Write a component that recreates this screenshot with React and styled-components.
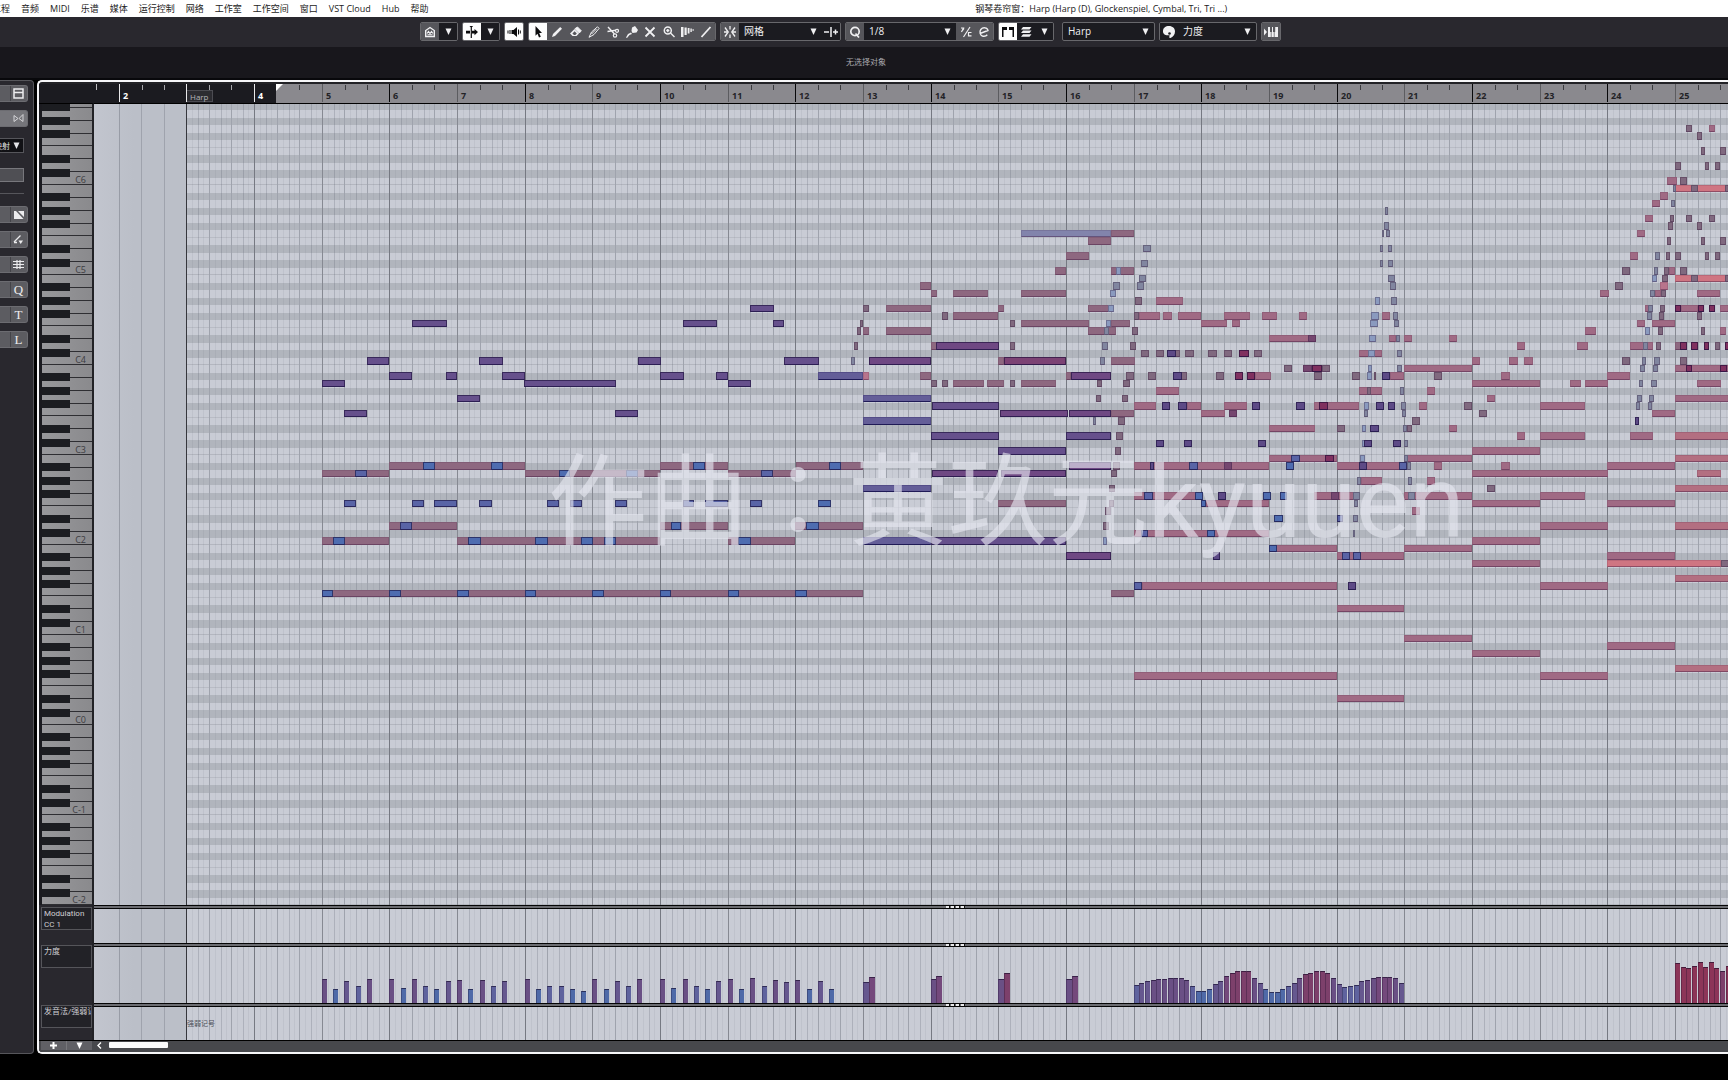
import React from 'react';
import styled, { createGlobalStyle, css } from 'styled-components';

const UI_FONT = '"Open Sans", "Noto Sans CJK SC", sans-serif';

const GlobalStyle = createGlobalStyle`
  *, *::before, *::after { box-sizing: border-box; }
  body { margin: 0; background: #000; font-family: ${UI_FONT}; overflow: hidden; }
  button, select { font: inherit; margin: 0; padding: 0; border: 0; }
`;

/* ---------- time axis ---------- */

const BAR_WIDTH = 203 / 3;
const AXIS_LEFT = 94;
const FIRST_BAR = 2;
const timeX = (bar) => Math.round(74 / 3 + (bar - FIRST_BAR) * BAR_WIDTH);
const barWidth = (bar) => timeX(bar + 1) - timeX(bar);
const BARS = Array.from({ length: 24 }, (_, i) => FIRST_BAR + i);
const ROW = 7.5;

/* ---------- note data: pitch -> "start-end colour" ---------- */

const COLORS = {
  r: '#8e6880', R: '#a06a84', m: '#80697f', s: '#8186a0', z: '#8a9abf',
  b: '#4e6cb0', B: '#5964a6', v: '#66508c', V: '#6f4883', i: '#645e98',
  g: '#7c4274', q: '#5d4a86', x: '#80305f', S: '#cf7582', p: '#b36f81',
  l: '#8284ac', k: '#b8748c', h: '#75466f',
};
const OUTLINED = 'vqbBVxg';
const SOFT = 'rRSpkl';

const NOTES = {
  103: '1686-1692m 1709-1715R',
  102: '1697-1702m',
  100: '1701-1705m 1720-1726m',
  98: '1675-1681m 1705-1709m 1715-1720m',
  96: '1667-1677R 1680-1687m',
  95: '1675-1734S 1673-1676s 1691-1698m 1725-1734m',
  94: '1660-1668R',
  93: '1652-1660R 1671-1675s',
  92: '1385-1388s',
  91: '1645-1653R 1670-1674m 1686-1692m 1709-1715m',
  90: '1384-1389s 1668-1673m 1697-1702m',
  89: '1021-1111l 1111-1134r 1382-1384s 1386-1390s 1637-1645R',
  88: '1088-1111r 1667-1671m 1701-1705m 1720-1726m',
  87: '1143-1151s 1380-1383s 1388-1392s',
  86: '1066-1089r 1630-1638R 1655-1660s 1666-1670m 1675-1681m 1705-1709m 1715-1720m',
  85: '1141-1148s 1380-1383s 1388-1393s',
  84: '1055-1066r 1111-1134r 1116-1121z 1622-1630m 1654-1658s 1669-1675R 1664-1669m 1680-1687m',
  83: '1139-1146s 1388-1395s 1675-1734S 1652-1657z 1662-1668m 1691-1698m 1725-1734m',
  82: '920-931r 1113-1120s 1137-1144s 1390-1396s 1615-1623m 1660-1668k',
  81: '931-937r 953-988r 1021-1066r 1110-1116z 1600-1609R 1655-1661R 1650-1655s 1661-1666m 1697-1720R',
  80: '1135-1142m 1156-1183R 1375-1380z 1391-1397s',
  79: '750-774v 863-869m 886-931r 998-1004r 1088-1110r 1108-1114z 1645-1649R 1648-1653s 1660-1665m 1681-1698R 1675-1681x 1698-1704x 1709-1715x 1720-1734R',
  78: '942-948m 953-998r 1139-1160R 1134-1139m 1163-1172R 1178-1201R 1224-1250R 1262-1277R 1299-1307R 1371-1379z 1382-1390R 1393-1398s 1647-1652s 1659-1664m 1697-1702m',
  77: '412-447v 683-717v 773-784v 860-863m 1010-1015m 1021-1089r 1111-1130r 1106-1111z 1201-1227R 1232-1240R 1370-1378z 1394-1399s 1637-1645R 1652-1675R',
  76: '857-861m 863-869r 886-931r 1088-1116r 1104-1109s 1132-1138m 1585-1596R 1645-1650z 1658-1663m 1701-1705m 1720-1726R',
  75: '1269-1316R 1308-1316h 1369-1376z 1389-1396R 1396-1400s 1404-1412R 1449-1457R',
  74: '854-858m 931-937r 936-999V 1010-1015m 1102-1108s 1130-1136m 1517-1525R 1577-1588R 1630-1653R 1643-1648s 1656-1661m 1675-1681r 1680-1687x 1691-1698x 1704-1709x 1715-1720m 1725-1734x',
  73: '1141-1149m 1156-1164m 1174-1180m 1167-1176q 1185-1194m 1208-1217m 1224-1232m 1239-1249x 1254-1262m 1359-1382R 1368-1375z 1397-1402s',
  72: '367-389v 479-503v 638-661v 784-819v 851-855s 869-931V 998-1004r 1004-1066g 1100-1105s 1111-1135r 1472-1480R 1509-1518R 1524-1533R 1622-1630m 1642-1646s 1654-1660s 1680-1687m',
  71: '1284-1292m 1303-1312h 1312-1322x 1322-1330m 1368-1372z 1397-1402s 1404-1472R 1640-1645s 1653-1658s 1675-1734R 1686-1692x 1720-1727x',
  70: '389-412v 446-457v 502-525v 660-684v 716-728v 818-863i 863-869k 920-931r 1066-1071r 1071-1111V 1126-1134m 1148-1156m 1180-1187m 1173-1182q 1216-1224m 1235-1243x 1255-1271R 1247-1255x 1314-1322m 1352-1360m 1374-1376m 1367-1372z 1390-1404R 1382-1390q 1434-1442m 1501-1510R 1607-1630R',
  69: '322-345v 524-616v 728-751v 931-937m 942-948m 953-984r 987-1004r 1010-1015m 1021-1056r 1097-1102m 1123-1130m 1472-1540R 1570-1581R 1585-1608R 1639-1643s 1651-1657s 1697-1721R',
  68: '1156-1179R 1359-1382R 1367-1371m 1400-1404s 1427-1435R',
  67: '457-480v 863-931i 1096-1101m 1122-1128m 1487-1495R 1637-1642s 1649-1654s 1675-1734R',
  66: '932-999v 1134-1156R 1162-1170q 1187-1201R 1178-1187q 1224-1247R 1252-1260q 1296-1305q 1314-1359R 1319-1328x 1364-1369z 1376-1384q 1388-1395q 1401-1406s 1419-1427R 1464-1472m 1540-1585R 1636-1640s 1648-1652s',
  65: '344-367v 615-638v 1000-1068V 1069-1111V 1111-1134r 1201-1225R 1229-1237h 1364-1368s 1402-1406s 1479-1487m 1652-1675R',
  64: '863-931i 1093-1096s 1118-1125m 1412-1420m 1635-1639q',
  63: '1269-1315R 1337-1345m 1362-1366z 1370-1379q 1407-1412m 1403-1407s 1449-1457R',
  62: '931-999v 1066-1111v 1116-1123m 1517-1525R 1540-1585R 1630-1653R 1675-1734p',
  61: '1156-1164q 1184-1192q 1258-1266q 1362-1365z 1364-1372q 1393-1401q 1404-1408s',
  60: '998-1066v 1115-1121m 1472-1540R',
  59: '1269-1337R 1291-1300B 1325-1334x 1360-1365z 1404-1472R 1404-1408s 1675-1734p',
  58: '389-525r 660-728r 796-863r 423-435b 491-503b 693-705b 829-841b 1069-1111V 1113-1120m 1134-1269R 1150-1154q 1189-1198B 1224-1232h 1286-1294b 1337-1404R 1359-1367q 1407-1411s 1399-1407B 1434-1442R 1501-1510R 1607-1675R',
  57: '322-389r 525-660r 728-796r 355-367B 559-570b 626-638b 761-773B 932-998V 1001-1066V 1111-1117m 1472-1608R 1697-1721p',
  56: '1357-1361s 1361-1382R 1408-1412s 1427-1435R',
  55: '863-931i 1109-1115m 1487-1495m 1675-1734p',
  54: '1134-1196R 1144-1153B 1195-1203b 1218-1226q 1263-1271b 1280-1287b 1314-1357R 1331-1339h 1353-1360s 1404-1472R 1408-1415s 1540-1585R',
  53: '344-356B 412-424B 434-457B 479-492B 547-559B 570-582B 615-627B 683-694B 705-728B 750-762B 818-831b 998-1066r 1109-1114m 1201-1206b 1206-1269R 1354-1358s 1472-1540R 1607-1675R',
  52: '1105-1111m 1412-1420R',
  51: '1274-1283b 1337-1343B 1353-1358s',
  50: '389-457r 660-728r 795-863r 400-412B 671-681b 806-819b 1103-1109m 1540-1608R 1675-1734p',
  49: '1134-1269R 1141-1148B 1207-1215b 1353-1355s',
  48: '322-389r 457-660r 728-795r 333-345b 468-481b 535-548b 581-593b 604-616b 738-751b 863-931i 931-1066v 1103-1107z 1472-1540R',
  47: '1269-1337R 1269-1277b 1404-1472R',
  46: '1066-1111V 1213-1220q 1337-1404R 1342-1350B 1353-1361B 1607-1675R',
  45: '1472-1540R 1607-1721S 1721-1734m',
  43: '1675-1734p',
  42: '1142-1337R 1134-1142B 1348-1356q 1540-1608R',
  41: '322-863r 322-333b 389-401b 457-469b 525-536b 592-604b 660-671b 728-739b 795-807b 1111-1134r',
  39: '1337-1404R',
  35: '1404-1472R',
  34: '1607-1675R',
  33: '1472-1540R',
  31: '1675-1734p',
  30: '1134-1337R 1540-1608R',
  27: '1337-1404R',
};

const PARSED_NOTES = Object.entries(NOTES).flatMap(([pitch, list]) =>
  list.split(' ').map((item) => {
    const [, from, to, kind] = item.match(/^(\d+)-(\d+)(\w)$/);
    return { pitch: Number(pitch), from: Number(from), to: Number(to), kind };
  })
);

/* velocity bars: `step` events per bar, heights from `bar` on */
const VELOCITIES = [
  { bar: 5, step: 6, width: 5, heights: [24, 14, 22, 17, 24, 0, 24, 15, 24, 17, 14, 22, 23, 14, 23, 17, 22, 0, 24, 14, 17, 17, 14, 12, 24, 14, 22, 17, 24, 0, 24, 15, 24, 17, 14, 22, 24, 14, 25, 17, 23, 21, 23, 14, 22, 14] },
  { bar: 13, step: 12, width: 6, heights: [21, 26] },
  { bar: 14, step: 12, width: 6, heights: [24, 27] },
  { bar: 15, step: 12, width: 6, heights: [24, 30] },
  { bar: 16, step: 12, width: 6, heights: [24, 27] },
  { bar: 17, step: 12, width: 5, heights: [18, 20, 22, 23, 24, 24, 25, 25, 25, 23, 17, 12, 12, 14, 19, 22, 27, 30, 32, 32, 32, 25, 20, 14, 11, 11, 14, 17, 20, 25, 29, 30, 32, 32, 30, 25, 19, 16, 17, 18, 22, 23, 25, 26, 26, 26, 25, 20] },
  { bar: 25, step: 12, width: 5, heights: [40, 36, 35, 37, 41, 36, 41, 35, 32, 37] },
];
const VELOCITY_BARS = VELOCITIES.flatMap(({ bar, step, width, heights }) =>
  heights
    .map((height, i) => ({ x: timeX(bar + i / step), width, height }))
    .filter((v) => v.height > 0)
);
const velocityColor = (h) => {
  if (h <= 15) return '#4f6aa8';
  if (h <= 18) return '#5f639e';
  if (h <= 22) return '#66588f';
  if (h <= 25) return '#6a5085';
  if (h <= 28) return '#74497c';
  if (h <= 32) return '#7d406b';
  return '#8c3558';
};

/* ---------- shell ---------- */

const Shell = styled.div`
  display: flex;
  flex-direction: column;
  height: 100vh;
  padding-bottom: 26px;
  background: #000;
  color: #e4e4e8;
`;

const MenuBar = styled.header`
  display: flex;
  align-items: center;
  height: 17px;
  background: #fff;
  color: #222;
  font-size: 9px;
  line-height: 16px;
  white-space: nowrap;
`;
const Menu = styled.nav`
  display: flex;
  gap: 11px;
  margin-left: -8px;
`;
const MenuItem = styled.button`
  background: none;
  color: #222;
`;
const WindowTitle = styled.h1`
  flex: 1;
  margin: 0;
  padding-left: 46px;
  font-size: 9px;
  font-weight: 400;
  text-align: center;
`;

const Toolbar = styled.div`
  display: flex;
  justify-content: center;
  align-items: center;
  gap: 4px;
  height: 30px;
  padding: 0 27px 1px 0;
  background: #29282e;
`;
const Group = styled.div`
  display: flex;
  height: 19px;
  border: 1px solid #68686c;
  border-radius: 2px;
  background: #1b1b20;
  overflow: hidden;
  ${(p) => p.$spaced && css`margin-left: 4px;`}
`;
const TONES = {
  dark: ['#1b1b20', '#f0f0f2'],
  mid: ['#56565b', '#f0f0f2'],
  lit: ['#fdfdfd', '#0b0b0d'],
};
const ToolButton = styled.button`
  display: flex;
  align-items: center;
  justify-content: center;
  width: ${(p) => p.$w || 18}px;
  background: ${(p) => TONES[p.$tone || 'mid'][0]};
  color: ${(p) => TONES[p.$tone || 'mid'][1]};
`;
const SelectBox = styled.label`
  display: grid;
  align-items: center;
  width: ${(p) => p.$w}px;
  padding: 0 5px;
  font-size: 10px;
  color: #f0f0f2;
  & > * { grid-area: 1 / 1; }
  & > svg { justify-self: end; pointer-events: none; }
`;
const Select = styled.select`
  width: 100%;
  height: 17px;
  appearance: none;
  background: transparent;
  color: inherit;
  line-height: 17px;
  outline: none;
`;

const InfoLine = styled.div`
  display: flex;
  align-items: center;
  justify-content: center;
  height: 33px;
  padding: 0 0 2px 4px;
  background: #18171c;
  border-bottom: 2px solid #08080b;
  color: #a9a9ae;
  font-size: 8px;
`;

const Workspace = styled.main`
  flex: 1;
  display: flex;
  gap: 3px;
  min-height: 0;
`;

/* ---------- inspector strip ---------- */

const Inspector = styled.aside`
  display: flex;
  flex-direction: column;
  gap: 8px;
  width: 34px;
  padding: 4px 5px 0 0;
  background: #29282e;
  border: 1px solid #56565b;
  border-left: 0;
  border-radius: 0 4px 4px 0;
`;
const InspectorTab = styled.button`
  display: flex;
  align-items: center;
  justify-content: center;
  height: 17px;
  padding-left: 10px;
  background: linear-gradient(to right, #5c5c61 10px, #444449 10px, #444449 11px, #5c5c61 11px);
  border: 1px solid #6c6c71;
  border-left: 0;
  border-radius: 0 3px 3px 0;
  color: #ececee;
  font: 13px/15px "Liberation Serif", serif;
  ${(p) => p.$bright && css`background: #75757a; color: #d4d4d7;`}
`;
const MapSelect = styled.label`
  display: grid;
  align-items: center;
  height: 15px;
  margin: 3px 4px 0 0;
  padding-right: 3px;
  background: #111115;
  border: 1px solid #56565b;
  border-left: 0;
  font-size: 8px;
  & > * { grid-area: 1 / 1; }
  & > svg { justify-self: end; pointer-events: none; }
`;
const MapChoice = styled.select`
  width: 24px;
  appearance: none;
  background: transparent;
  color: #e4e4e8;
  outline: none;
  margin-left: -6px;
`;
const Swatch = styled.button`
  height: 14px;
  margin: 7px 4px 0 0;
  background: #4f4f54;
  border: 1px solid #77777c;
  border-left: 0;
`;
const Rule = styled.hr`
  width: 24px;
  height: 1px;
  margin: 3px 0 4px;
  border: 0;
  background: #56565b;
`;

/* ---------- editor ---------- */

const Editor = styled.section`
  flex: 1;
  display: flex;
  flex-direction: column;
  min-width: 0;
  padding-top: 2px;
  background: #222226;
  border: 2px solid #f6f6f8;
  border-right: 0;
  border-radius: 5px 0 0 5px;
  overflow: hidden;
`;
const Track = styled.div`
  display: flex;
  flex: ${(p) => (p.$h ? `0 0 ${p.$h}px` : '1 1 0')};
  min-height: 0;
`;
const Head = styled.div`
  flex: 0 0 55px;
  padding: 2px 0 0 2px;
  background: #29282e;
  border-right: 2px solid #222226;
  overflow: hidden;
`;
const Axis = styled.div`
  position: relative;
  flex: 1;
  display: flex;
  min-width: 0;
  min-height: 0;
  overflow: hidden;
`;
const RulerAxis = styled(Axis)`
  background: linear-gradient(to right, #1b1b20 182px, #8a898e 182px);
  border-bottom: 1px solid #000;
`;
const RulerHead = styled(Head)`
  background: #1b1b20;
  border-color: #1b1b20;
  border-bottom: 1px solid #000;
`;
const Lead = styled.div`
  flex: 0 0 25px;
  background: linear-gradient(to right, transparent 2px, ${(p) => p.$line} 2px, ${(p) => p.$line} 3px, transparent 3px) 0 0 / 25px ${(p) => p.$tick || '100%'} no-repeat;
`;
const RulerBar = styled.div`
  flex: 0 0 auto;
  display: flex;
  height: 18px;
  padding: 6px 0 0 3px;
  color: ${(p) => (p.$outside ? '#fff' : '#232327')};
  border-left: 1px solid ${(p) => (p.$outside ? '#e8e8ea' : p.$strong ? '#08080a' : '#5c5c60')};
  background-image: linear-gradient(${(p) => (p.$outside ? '#a8a8ac' : '#3c3c40')} 0 0), linear-gradient(${(p) => (p.$late || !p.$outside ? '#3c3c40' : '#a8a8ac')} 0 0);
  background-size: 1px 5px;
  background-position: 22px 1px, 44px 1px;
  background-repeat: no-repeat;
  font: 700 9px/12px "Open Sans", sans-serif;
`;
const TrackTag = styled.span`
  height: 12px;
  margin-left: -3px;
  padding: 0 3px;
  background: #2c2c31;
  border: 1px solid #4c4c52;
  border-left: 0;
  color: #b4b4b8;
  font-size: 8px;
  font-weight: 400;
  line-height: 11px;
`;
const Locator = styled.i`
  position: absolute;
  left: 182px;
  top: 0;
  border-top: 7px solid #fff;
  border-right: 7px solid transparent;
`;

/* one octave of lane shading, repeated from the bottom of the roll upward */
const RollAxis = styled(Axis)`
  background-color: #c9ccd5;
  background-image: linear-gradient(to bottom,
    #c9ccd5 8px, #b1b5bd 8px, #b1b5bd 15px, #c9ccd5 15px,
    #c9ccd5 23px, #b1b5bd 23px, #b1b5bd 30px, #c9ccd5 30px,
    #c9ccd5 38px, #b1b5bd 38px, #b1b5bd 45px, #c9ccd5 45px,
    #c9ccd5 52px, #b9bcc5 52px, #b9bcc5 53px, #c9ccd5 53px,
    #c9ccd5 60px, #b1b5bd 60px, #b1b5bd 68px, #c9ccd5 68px,
    #c9ccd5 75px, #b1b5bd 75px, #b1b5bd 83px, #c9ccd5 83px,
    #c9ccd5 89px, #b3b6bf 89px);
  background-size: 100% 90px;
  background-position: left bottom;
`;
const LaneAxis = styled(Axis)`
  background: #c9ccd5;
`;
const BeforePart = styled.div`
  position: absolute;
  inset: 0 auto 0 0;
  width: 92px;
  background: linear-gradient(to right, #c2c5ce, #bbbfc8 40px, #bbbfc8);
`;
const GridBar = styled.div`
  position: relative;
  flex: 0 0 auto;
  display: flex;
  border-left: 1px solid ${(p) => (p.$start ? '#36373d' : p.$faint ? '#989ca6' : p.$strong ? '#767982' : '#868992')};
`;
const Beat = styled.div`
  flex: 1;
  background-image: ${(p) => (p.$faint
    ? 'none'
    : `linear-gradient(rgba(90,95,110,.25), rgba(90,95,110,.25)),
       linear-gradient(rgba(90,95,110,.09), rgba(90,95,110,.09)),
       linear-gradient(rgba(90,95,110,.09), rgba(90,95,110,.09))`)};
  background-size: 1px 100%;
  background-position: 11px 0, 5px 0, 16px 0;
  background-repeat: no-repeat;
  & + & { border-left: 1px solid ${(p) => (p.$faint ? '#a3a7b1' : '#9fa3ad')}; }
`;

const noteEdges = (kind) => {
  if (OUTLINED.includes(kind)) return ['rgba(20,10,50,.55)', 'rgba(20,10,60,.7)'];
  if (kind === 'i') return ['rgba(40,30,90,.25)', 'rgba(15,10,70,.8)'];
  if (SOFT.includes(kind)) return ['rgba(60,30,60,.14)', 'rgba(60,20,60,.42)'];
  return ['rgba(50,30,60,.32)', 'rgba(50,20,60,.42)'];
};
const NoteBox = styled.div.attrs((p) => ({
  style: {
    left: p.$x,
    width: p.$w,
    bottom: Math.round(p.$pitch * ROW),
    height: Math.round((p.$pitch + 1) * ROW) - Math.round(p.$pitch * ROW),
  },
}))`
  position: absolute;
  background: ${(p) => COLORS[p.$kind]};
  border: 1px solid ${(p) => noteEdges(p.$kind)[0]};
  border-bottom-color: ${(p) => noteEdges(p.$kind)[1]};
`;
const VelocityBar = styled.div.attrs((p) => ({
  style: { left: p.$x, width: p.$w, height: p.$h, background: velocityColor(p.$h) },
}))`
  position: absolute;
  bottom: 0;
  border-top: 1px solid rgba(20, 10, 40, .6);
  border-left: 1px solid rgba(20, 10, 40, .3);
`;
const Watermark = styled.div`
  position: absolute;
  left: 454px;
  bottom: 330px;
  color: rgba(228, 229, 238, .66);
  font: 100px/144px Roboto, "Noto Sans CJK TC", sans-serif;
  white-space: nowrap;
  pointer-events: none;
`;

/* ---------- keyboard ---------- */

const KeyHead = styled(Head)`
  display: flex;
  flex-direction: column-reverse;
  padding: 0 0 0 3px;
  background: #1b1b20;
`;
const Octave = styled.div`
  position: relative;
  flex: 0 0 90px;
  display: flex;
  flex-direction: column;
`;
const WhiteKey = styled.div`
  flex: 1 1 0;
  min-height: 0;
  background: linear-gradient(to right, #98989b, #8a8a8d);
  border-bottom: 1px solid #2e2e32;
  padding-right: 6px;
  color: #3c3c41;
  font-size: 9px;
  line-height: 15px;
  text-align: right;
`;
const BlackKey = styled.div`
  position: absolute;
  left: 0;
  top: ${(p) => p.$top}px;
  width: 28px;
  height: 8px;
  background: #1c1d21;
`;

/* ---------- controller lanes ---------- */

const LaneColumn = styled.div`
  flex: 1;
  display: flex;
  flex-direction: column;
  min-width: 0;
`;
const Splitter = styled.div`
  display: flex;
  flex: 0 0 4px;
  justify-content: center;
  align-items: center;
  gap: 1px;
  padding-left: 88px;
  background: #6c6d72;
  border-top: 1px solid #050506;
  border-bottom: 1px solid #050506;
`;
const Dot = styled.i`
  width: 4px;
  height: 2px;
  border-right: 1px solid #111;
  background: #e8e8ea;
`;
const LaneLabel = styled.div`
  height: 23px;
  padding: 0 0 0 2px;
  border: 1px solid #55555a;
  background: #222227;
  color: #cfcfd4;
  font: 8px/11px Roboto, "Noto Sans CJK SC", sans-serif;
  white-space: nowrap;
  overflow: hidden;
`;
const LaneNote = styled.span`
  position: absolute;
  left: 93px;
  top: 12px;
  color: #4c4f58;
  font-size: 7px;
  line-height: 10px;
`;
const Footer = styled.footer`
  display: flex;
  align-items: flex-start;
  height: 12px;
  padding-left: 2px;
  background: #47484c;
  border-top: 1px solid #000;
`;
const LaneButtons = styled.div`
  display: flex;
  width: 51px;
  height: 9px;
  background: #606065;
`;
const LaneButton = styled.button`
  flex: 1;
  display: flex;
  align-items: center;
  justify-content: center;
  background: none;
  color: #fff;
  & + & { border-left: 1px solid #77777b; }
`;
const ScrollLeft = styled.button`
  display: flex;
  margin: 1px 7px 0 5px;
  background: none;
  color: #fff;
`;
const Thumb = styled.div`
  width: 59px;
  height: 6px;
  margin-top: 1px;
  border-radius: 1px;
  background: #fbfbfc;
`;

/* ---------- icons ---------- */

const Svg = ({ s = 12, w, children }) => (
  <svg width={w || s} height={s} viewBox={`0 0 ${w || s} ${s}`} fill="currentColor" stroke="none" aria-hidden="true">
    {children}
  </svg>
);
const L = (props) => <path fill="none" stroke="currentColor" strokeWidth="1.4" {...props} />;
const Caret = () => <Svg s={7}><path d="M.5.5h6L3.500 7z" /></Svg>;

const ICONS = {
  home: <Svg><L d="M1.700 10.500V4.500L6 1.500l4.300 3v6z" /><L d="M3 7.500l1.500-2L6 7.500l1.500-2L9 7.500M3.500 8.800h5" strokeWidth="1.100" /></Svg>,
  scroll: <Svg><path d="M0 4.800h4v2.600H0zM6 4.800h2.500V3L12 6.100 8.500 9.200V7.400H6zM4.700 0h1.200v12H4.700zM3.500 0h3.600L5.300 2z" /></Svg>,
  speaker: <Svg w={14}><path d="M4.500 4h2L10 1v10L6.500 8h-2zM2.500 4h1v4h-1zM.5 4.500h1v3h-1zM11 3.500h1v5h-1zM12.800 4.500h1v3h-1z" /></Svg>,
  arrow: <Svg><path d="M3.500 0 10 7H7.200l1.600 3.700-1.800.8L5.500 7.800 3.500 9.700z" /></Svg>,
  pencil: <Svg><path d="M1 11l1-3L9.200 1 11 2.800 4 10z" /></Svg>,
  eraser: <Svg><path d="M0 7.500 4.500 3 9 7.500 6.500 10h-4z" /><L d="M5 2.700 7.500 1 11.300 4.800 9.300 7z" strokeWidth="1" fill="currentColor" /><path d="M2.400 7.400 4.600 5.200 6.800 7.400 5.300 9H4z" fill="#56565b" /></Svg>,
  trim: <Svg><L d="M1 11.300 3.500 6 9.500.8l1.600 1.600L6 8.500zM3.500 8 8.500 3" strokeWidth="1" /></Svg>,
  scissors: <Svg><L d="M1 1l6.500 7M.5 5.500 8.800 4.300" /><circle cx="8" cy="9.500" r="1.700" fill="none" stroke="currentColor" strokeWidth="1.200" /><circle cx="10" cy="4.800" r="1.500" fill="none" stroke="currentColor" strokeWidth="1.200" /></Svg>,
  glue: <Svg><path d="M6 1.500 9 0l3 4-1.500 2.500-4 .5-1-2zM5 6.500 6 8l-2.500 1L1 12l-1-.5 2-3.500z" /></Svg>,
  mute: <Svg><L d="M1.500 1.500l9 9M10.500 1.500l-9 9" strokeWidth="1.800" /></Svg>,
  zoom: <Svg><circle cx="4.800" cy="4.500" r="3.500" fill="none" stroke="currentColor" strokeWidth="1.500" /><L d="M7.500 7 11.500 11M3.200 4.500h3.200M4.800 3v3.200" /></Svg>,
  warp: <Svg w={13}><path d="M0 1h2.500v10H0zM3.500 1.500h2.200v7.500H3.500zM6.700 2h1.800v5.500H6.700zM9.400 2.500h1.400V6H9.400zM11.600 3h1v2h-1z" /></Svg>,
  line: <Svg><L d="M1.500 11 10.500 1" strokeWidth="1.800" /></Svg>,
  snap: <Svg><L d="M6 0v3.500M6 8.500V12M1 1.500 4.200 6 1 10.500M11 1.500 7.800 6 11 10.500M0 6h3M9 6h3" strokeWidth="1.300" /></Svg>,
  nudge: <Svg w={14}><L d="M0 6h5M7 1v10M9 6h5M11.500 3.500v5" strokeWidth="1.500" /></Svg>,
  q: <Svg><circle cx="6" cy="5.500" r="4.200" fill="none" stroke="currentColor" strokeWidth="1.700" /><L d="M6.500 7.500l3.500 4" strokeWidth="1.700" /></Svg>,
  iq: <Svg><L d="M10 1 3.500 11M1 2h2.500L1.500 6M4 2.500 2.500 4.500M11.500 6.500H8.500v3.300h3" strokeWidth="1.200" /></Svg>,
  e: <Svg><L d="M2 7.500 10 4.500C9.500 1.500 5 .8 2.800 3.500 1 6 2.200 9.800 5 10.200c2 .3 3.300-.2 4.300-1.400" /></Svg>,
  parts: <Svg w={14}><path d="M1 1h5v3H2.500v7H1zM8 1h5v10h-1.500V4H8z" /></Svg>,
  layers: <Svg><path d="M3 1h8.500L9.500 3.500H1zM3 4.600h8.500L9.500 7.100H1zM3 8.200h8.500L9.500 10.700H1z" /></Svg>,
  palette: <Svg><path d="M6 0c3.500 0 6 2.300 6 5.500S10 11 7.500 12C6 12.300 6 10.500 6.800 9.500 5 8.500 3.500 10 1.500 8.500 0 7.300 0 6 0 5c0-3 2.500-5 6-5z" /><circle cx="6.500" cy="7.500" r="1.300" fill="#1b1b20" /></Svg>,
  keys: <Svg w={14}><path d="M0 2.500 3 6 0 9.500zM4 1h2v5h.8v5H4zM7.500 11V6H8V1h1v5h.8v5zM10.500 11V6h.7V1H14v10z" /></Svg>,
};

const TOOLS = [
  ['arrow', 18], ['pencil', 19], ['eraser', 19], ['trim', 18], ['scissors', 19],
  ['glue', 19], ['mute', 18], ['zoom', 19], ['warp', 19], ['line', 18],
];

const INSPECTOR_ICONS = {
  panel: <Svg s={11}><L d="M1 1h9v9H1zM1 4.500h9" strokeWidth="1.500" /></Svg>,
  bowtie: <Svg s={11}><L d="M1 2.500 5 5.500 1 8.500zM10 1.500v7L6 5.500z" strokeWidth="1" /></Svg>,
  diagonal: <Svg s={10}><path d="M0 1h2l7.500 8H0zM4 1h6v6z" /></Svg>,
  slope: <Svg s={11}><L d="M1 8 7.500 1.500M1 8.500h3" strokeWidth="1.300" /><path d="M5.500 6.500h4.500L7.700 10z" /></Svg>,
  sliders: <Svg s={11}><L d="M0 2.500h11M0 5.500h11M0 8.500h11M4 1v9M7 1v9" strokeWidth="1.200" /></Svg>,
};

/* ---------- parts ---------- */

function Dropdown({ label, value, width }) {
  return (
    <SelectBox $w={width}>
      <Select aria-label={label} defaultValue={value}>
        <option>{value}</option>
      </Select>
      <Caret />
    </SelectBox>
  );
}

function TimeGrid() {
  return (
    <>
      <BeforePart />
      <Lead $line="#a9adb6" />
      {BARS.map((bar) => (
        <GridBar key={bar} $faint={bar < 3} $start={bar === 3} $strong={bar % 2 === 0} style={{ width: barWidth(bar) }}>
          {[0, 1, 2].map((n) => <Beat key={n} $faint={bar < 3} />)}
        </GridBar>
      ))}
    </>
  );
}

function Ruler() {
  return (
    <Track $h={20}>
      <RulerHead />
      <RulerAxis>
        <Lead $line="#bdbdc0" $tick="6px" />
        {BARS.map((bar) => (
          <RulerBar key={bar} $outside={bar < 5} $late={bar === 4} $strong={bar % 2 === 0} style={{ width: barWidth(bar) }}>
            {bar === 3 ? <TrackTag>Harp</TrackTag> : bar}
          </RulerBar>
        ))}
        <Locator />
      </RulerAxis>
    </Track>
  );
}

function Keyboard() {
  return (
    <KeyHead>
      {Array.from({ length: 9 }, (_, i) => (
        <Octave key={i}>
          {['B', 'A', 'G', 'F', 'E', 'D', 'C'].map((k) => (
            <WhiteKey key={k}>{k === 'C' ? `C${i - 2}` : ''}</WhiteKey>
          ))}
          {[8, 22, 35, 60, 74].map((top) => <BlackKey key={top} $top={top} />)}
        </Octave>
      ))}
    </KeyHead>
  );
}

function PianoRoll() {
  return (
    <Track>
      <Keyboard />
      <RollAxis>
        <TimeGrid />
        {PARSED_NOTES.map((n, i) => (
          <NoteBox key={i} $x={n.from - AXIS_LEFT} $w={n.to - n.from} $pitch={n.pitch} $kind={n.kind} />
        ))}
        <Watermark>作曲：黄玖元kyuuen</Watermark>
      </RollAxis>
    </Track>
  );
}

function Lane({ height, label, children }) {
  return (
    <Track $h={height}>
      <Head><LaneLabel>{label}</LaneLabel></Head>
      <LaneColumn>
        <Splitter><Dot /><Dot /><Dot /><Dot /></Splitter>
        <LaneAxis>
          <TimeGrid />
          {children}
        </LaneAxis>
      </LaneColumn>
    </Track>
  );
}

export default function App() {
  return (
    <Shell>
      <GlobalStyle />
      <MenuBar>
        <Menu>
          {['工程', '音频', 'MIDI', '乐谱', '媒体', '运行控制', '网络', '工作室', '工作空间', '窗口', 'VST Cloud', 'Hub', '帮助'].map((m) => (
            <MenuItem key={m}>{m}</MenuItem>
          ))}
        </Menu>
        <WindowTitle>钢琴卷帘窗：Harp (Harp (D), Glockenspiel, Cymbal, Tri, Tri ...)</WindowTitle>
      </MenuBar>

      <Toolbar>
        <Group>
          <ToolButton aria-label="Home">{ICONS.home}</ToolButton>
          <ToolButton aria-label="Home options" $tone="dark"><Caret /></ToolButton>
        </Group>
        <Group>
          <ToolButton aria-label="Auto-scroll" $tone="lit">{ICONS.scroll}</ToolButton>
          <ToolButton aria-label="Auto-scroll options" $tone="dark"><Caret /></ToolButton>
        </Group>
        <Group>
          <ToolButton aria-label="Acoustic feedback" $tone="lit">{ICONS.speaker}</ToolButton>
        </Group>
        <Group>
          {TOOLS.map(([name, width]) => (
            <ToolButton key={name} aria-label={name} $w={width} $tone={name === 'arrow' ? 'lit' : 'mid'}>{ICONS[name]}</ToolButton>
          ))}
        </Group>
        <Group>
          <ToolButton aria-label="Snap">{ICONS.snap}</ToolButton>
          <Dropdown label="Snap type" value="网格" width={83} />
          <ToolButton aria-label="Nudge" $tone="dark">{ICONS.nudge}</ToolButton>
        </Group>
        <Group>
          <ToolButton aria-label="Quantize">{ICONS.q}</ToolButton>
          <Dropdown label="Quantize value" value="1/8" width={92} />
          <ToolButton aria-label="Iterative quantize" $w={19}>{ICONS.iq}</ToolButton>
          <ToolButton aria-label="Quantize panel">{ICONS.e}</ToolButton>
        </Group>
        <Group>
          <ToolButton aria-label="Show part borders" $tone="lit">{ICONS.parts}</ToolButton>
          <ToolButton aria-label="Edit active part" $tone="dark">{ICONS.layers}</ToolButton>
          <ToolButton aria-label="Part options" $tone="dark"><Caret /></ToolButton>
        </Group>
        <Group $spaced>
          <Dropdown label="Active part" value="Harp" width={91} />
        </Group>
        <Group>
          <ToolButton aria-label="Event colors" $tone="dark">{ICONS.palette}</ToolButton>
          <Dropdown label="Color by" value="力度" width={78} />
        </Group>
        <Group>
          <ToolButton aria-label="Step input">{ICONS.keys}</ToolButton>
        </Group>
      </Toolbar>

      <InfoLine>无选择对象</InfoLine>

      <Workspace>
        <Inspector>
          <InspectorTab aria-label="Sections">{INSPECTOR_ICONS.panel}</InspectorTab>
          <InspectorTab aria-label="Expression map" $bright>{INSPECTOR_ICONS.bowtie}</InspectorTab>
          <MapSelect>
            <MapChoice aria-label="Map" defaultValue="映射"><option>映射</option></MapChoice>
            <Caret />
          </MapSelect>
          <Swatch aria-label="Articulation" />
          <Rule />
          <InspectorTab aria-label="Note expression">{INSPECTOR_ICONS.diagonal}</InspectorTab>
          <InspectorTab aria-label="Pitch">{INSPECTOR_ICONS.slope}</InspectorTab>
          <InspectorTab aria-label="Chord editing">{INSPECTOR_ICONS.sliders}</InspectorTab>
          <InspectorTab>Q</InspectorTab>
          <InspectorTab>T</InspectorTab>
          <InspectorTab>L</InspectorTab>
        </Inspector>

        <Editor>
          <Ruler />
          <PianoRoll />
          <Lane height={38} label={<>Modulation<br />CC 1</>} />
          <Lane height={60} label="力度">
            {VELOCITY_BARS.map((v, i) => <VelocityBar key={i} $x={v.x} $w={v.width} $h={v.height} />)}
          </Lane>
          <Lane height={37} label="发音法/强弱记">
            <LaneNote>强弱记号</LaneNote>
          </Lane>
          <Footer>
            <LaneButtons>
              <LaneButton aria-label="Add lane"><Svg s={7}><path d="M2.500 0h2v2.500H7v2H4.500V7h-2V4.500H0v-2h2.500z" /></Svg></LaneButton>
              <LaneButton aria-label="Lane presets"><Caret /></LaneButton>
            </LaneButtons>
            <ScrollLeft aria-label="Scroll left"><Svg s={7} w={5}><L d="M4 .5 1 3.500l3 3" /></Svg></ScrollLeft>
            <Thumb />
          </Footer>
        </Editor>
      </Workspace>
    </Shell>
  );
}
